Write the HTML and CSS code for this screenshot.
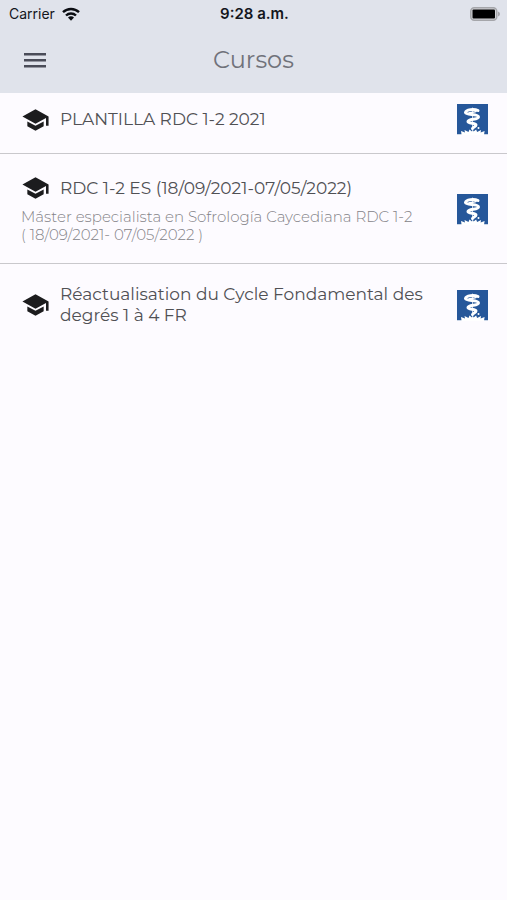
FILE: index.html
```html
<!DOCTYPE html>
<html lang="es">
<head>
<meta charset="utf-8">
<meta name="viewport" content="width=device-width, initial-scale=1">
<title>Cursos</title>
<link rel="stylesheet" href="styles.css">
</head>
<body>
<svg class="defs" aria-hidden="true">
  <symbol id="cap" viewBox="0 0 24 24">
    <path d="M5 13.180v4.200L12 21.200l7-3.820v-4.200L12 17l-7-3.820zM12 2.800L0.800 9l11.200 6.200 9-4.900V17h2.200V9L12 2.800z"/>
  </symbol>
  <symbol id="logo" viewBox="0 0 31 31">
    <path fill="#26579a" d="M0 0h31v31H0z"/>
    <g fill="none" stroke="#fff" stroke-linecap="round" stroke-linejoin="round">
      <path stroke-width="3" d="M21 6.500C17 4.500 9 5.500 8.500 8.500C9 11.500 21.500 9.500 21.500 13C21.500 16 11 14.500 11 17.500C11 20 19 18.500 19 21C19 22.800 16 23 15.500 24.500"/>
      <path stroke-width="1.500" d="M12 9C14 8 18 8.500 19 7.500"/>
      <path stroke-width="1" stroke-opacity="0.700" d="M15.500 4V26"/>
    </g>
    <path fill="#fff" d="M0 30.300h4.500L4 27l4 1.500L7.500 26l4 2 1-2.500 2.500 2 .8-2 .8 2 2.500-2 1 2.500 4-2-.5 2.500 4-1.500-.5 3.300H31v.7H0z"/>
    <circle cx="21.500" cy="24" r="1" fill="#fff"/>
  </symbol>
</svg>
<header class="header">
  <div class="status">
    <div class="carrier">
      <span>Carrier</span>
      <svg class="wifi" viewBox="0 0 18 14" aria-hidden="true">
        <g fill="none" stroke="#0b0d12" stroke-width="2.400">
          <path d="M1 5.200a11.500 11.500 0 0 1 16 0"/>
          <path d="M4 8.500a7.200 7.200 0 0 1 10 0"/>
        </g>
        <path fill="#0b0d12" d="M6 10.600a4.200 4.200 0 0 1 6 0L9 13.800z"/>
      </svg>
    </div>
    <time class="clock">9:28 a.m.</time>
    <svg class="battery" viewBox="0 0 30 14" aria-hidden="true">
      <rect x="0.750" y="0.750" width="26" height="12.500" rx="3.500" fill="#d4d5d8" stroke="#a5a6aa" stroke-width="1.500"/>
      <path fill="#a5a6aa" d="M28 4.500q2 .8 2 2.500t-2 2.500z"/>
      <rect x="2.500" y="2.500" width="22.500" height="9" rx="1"/>
    </svg>
  </div>
  <div class="toolbar">
    <button class="menu" type="button" aria-label="Menú">
      <svg viewBox="0 0 24 16" aria-hidden="true"><path fill="#4a4c58" d="M1 0h22v2.500H1zM1 6h22v2.500H1zM1 12h22v2.500H1z"/></svg>
    </button>
    <h1 class="title">Cursos</h1>
  </div>
</header>
<main class="courses">
  <article class="course">
    <div class="text">
      <h2 class="name"><svg class="cap" aria-hidden="true"><use href="#cap"/></svg><span>PLANTILLA RDC 1-2 2021</span></h2>
    </div>
    <svg class="logo" aria-hidden="true"><use href="#logo"/></svg>
  </article>
  <article class="course">
    <div class="text">
      <h2 class="name"><svg class="cap" aria-hidden="true"><use href="#cap"/></svg><span>RDC 1-2 ES (18/09/2021-07/05/2022)</span></h2>
      <p class="detail">Máster especialista en Sofrología Caycediana RDC 1-2<br>( 18/09/2021- 07/05/2022 )</p>
    </div>
    <svg class="logo" aria-hidden="true"><use href="#logo"/></svg>
  </article>
  <article class="course">
    <div class="text">
      <h2 class="name"><svg class="cap" aria-hidden="true"><use href="#cap"/></svg><span>Réactualisation du Cycle Fondamental des degrés 1 à 4 FR</span></h2>
    </div>
    <svg class="logo" aria-hidden="true"><use href="#logo"/></svg>
  </article>
</main>
</body>
</html>
```
FILE: styles.css
```css
* {
  box-sizing: border-box;
}

body {
  margin: 0;
  min-height: 100vh;
  background: #fdfbff;
  color: #505054;
  font-family: Montserrat, Inter, sans-serif;
}

.defs {
  display: none;
}

.header {
  background: #e0e3eb;
}

.status {
  display: grid;
  grid-template-columns: 1fr auto 1fr;
  align-items: center;
  height: 27px;
  padding: 0 7px 0 9px;
  color: #14161c;
  font-family: Inter, sans-serif;
  font-size: 14px;
}

.carrier {
  display: flex;
  align-items: center;
  gap: 7px;
}

.wifi {
  width: 18px;
  height: 14px;
}

.clock {
  font-size: 15px;
  font-weight: 600;
}

.battery {
  justify-self: end;
  width: 30px;
  height: 14px;
}

.toolbar {
  display: grid;
  grid-template-columns: 1fr auto 1fr;
  align-items: center;
  height: 66px;
  padding: 0 23px;
}

.menu {
  width: 24px;
  height: 24px;
  padding: 5px 0 3px;
  border: 0;
  background: none;
}

.menu svg {
  display: block;
  width: 24px;
  height: 16px;
}

.title {
  margin: 0;
  color: #70727a;
  font-size: 24px;
  font-weight: 400;
  line-height: 32px;
}

.course {
  display: flex;
  align-items: center;
  gap: 16px;
  padding: 20px 19px 19px 21px;
  border-bottom: 1px solid #c9c8cc;
}

.course:first-child {
  padding-top: 11px;
  padding-bottom: 18px;
}

.course:last-child {
  border-bottom: 0;
}

.text {
  flex: 1;
  min-width: 0;
}

.name {
  display: flex;
  align-items: center;
  gap: 10px;
  min-height: 28px;
  margin: 0;
  font-size: 17px;
  font-weight: 400;
  line-height: 21px;
}

.cap {
  flex: none;
  width: 29px;
  height: 28px;
  fill: #1c1c1e;
}

.detail {
  margin: 6px 0 0;
  color: #848388;
  font-size: 15px;
  font-weight: 300;
  line-height: 18px;
}

.logo {
  flex: none;
  width: 31px;
  height: 31px;
}
```
